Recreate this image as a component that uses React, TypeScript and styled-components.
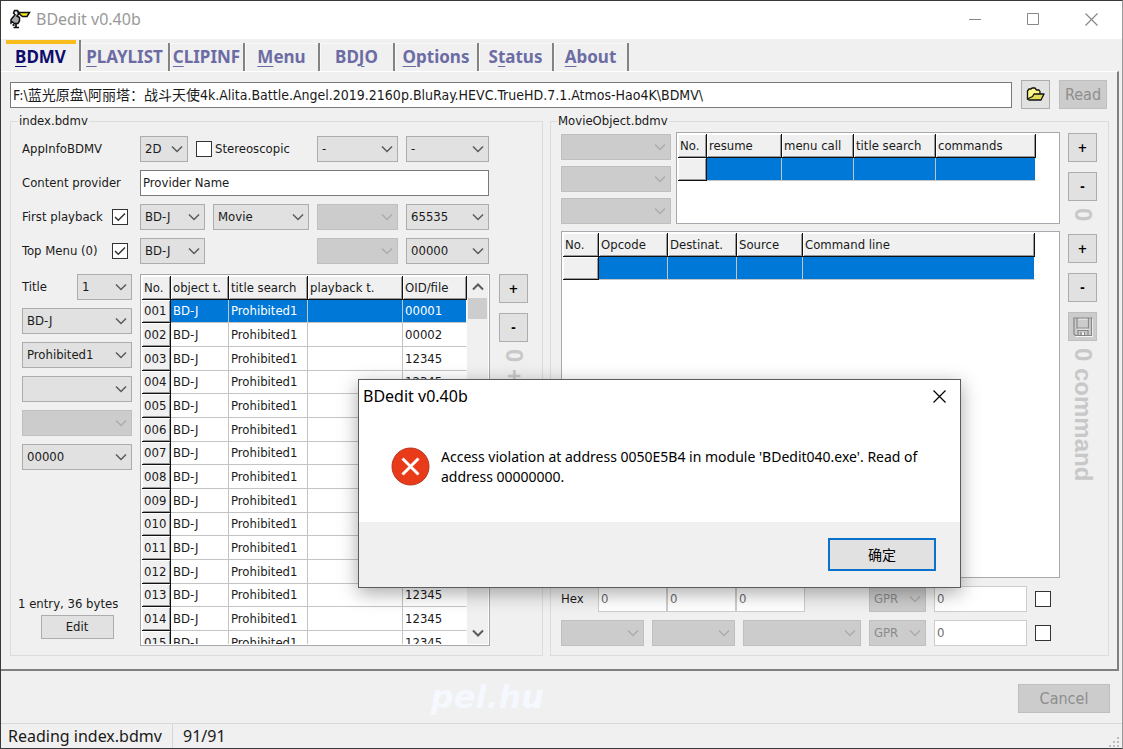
import React from "react";
import styled, { createGlobalStyle, css } from "styled-components";

const uiFont = `"DejaVu Sans Condensed", "Noto Sans", "Noto Sans CJK SC", sans-serif`;
const shellFont = `"Noto Sans", "Noto Sans CJK SC", sans-serif`;

const GlobalStyle = createGlobalStyle`
  *, *::before, *::after { box-sizing: border-box; }
  body { margin: 0; background: #f0f0f0; font: 13px/18px ${uiFont}; color: #1a1a1a; }
  button, input, select { font: inherit; color: inherit; margin: 0; border-radius: 0; }
`;

const Window = styled.div`
  position: relative;
  display: flex;
  flex-direction: column;
  height: 100vh;
  min-height: 640px;
  min-width: 1000px;
  background: #f0f0f0;
  border: 1px solid #3a3a3c;
  border-right-color: #9a9a9a;
`;

const TitleBar = styled.header`
  display: flex;
  align-items: center;
  flex: none;
  height: 38px;
  padding: 0 2px 2px 9px;
  background: #fff;
  color: #999;
  font: 16px/24px ${shellFont};
`;

const TitleText = styled.h1`
  flex: 1;
  margin: 0 0 0 5px;
  font: inherit;
`;

const CaptionButton = styled.button`
  display: grid;
  place-items: center;
  width: 58px;
  height: 36px;
  padding: 0;
  border: 0;
  background: none;
`;

const Tabs = styled.nav`
  display: flex;
  flex: none;
  align-items: flex-end;
  height: 32px;
  padding-left: 5px;
`;

const Tab = styled.button<{ $active?: boolean; $wide?: number }>`
  width: ${(p) => p.$wide ?? 75}px;
  height: ${(p) => (p.$active ? 31 : 28)}px;
  padding: 0 2px;
  border: 0;
  border-right: 2px solid #838383;
  background: #f0f0f0;
  box-shadow: inset 1px 1px #fafafa;
  color: #6c6ca4;
  font: bold 17px/26px ${shellFont};
  u { text-underline-offset: 3px; text-decoration-thickness: 1px; }
  ${(p) =>
    p.$active &&
    css`
      color: #0c0c6c;
      background: linear-gradient(#f8bc1c, #f8bc1c) 0 0 / 70px 4px no-repeat #f0f0f0;
      box-shadow: none;
      padding: 3px 4px 0 0;
    `}
`;

const Panel = styled.main`
  display: flex;
  flex-direction: column;
  flex: 1;
  min-height: 0;
  margin-right: 3px;
  padding: 8px 8px 13px 9px;
  border-top: 1px solid #fff;
  border-right: 2px solid #808080;
  border-bottom: 2px solid #808080;
`;

const PathRow = styled.div`
  display: flex;
  align-items: center;
  flex: none;
  gap: 9px;
  padding-right: 2px;
`;

const TextBox = styled.input<{ $w?: number }>`
  flex: ${(p) => (p.$w ? "none" : 1)};
  width: ${(p) => (p.$w ? `${p.$w}px` : "auto")};
  min-width: 0;
  height: 26px;
  padding: 0 2px 2px;
  border: 1px solid #7a7a7a;
  background: #fff;
  &:disabled { border-color: #ccc; color: #6d6d6d; }
`;

const PathBox = styled(TextBox)`
  font-size: 14px;
`;

const PushButton = styled.button<{ $w?: number; $h?: number }>`
  display: grid;
  place-items: center;
  flex: none;
  width: ${(p) => p.$w ?? 29}px;
  height: ${(p) => p.$h ?? 29}px;
  padding: 0;
  border: 1px solid #adadad;
  background: #e1e1e1;
  &:disabled { border-color: #bfbfbf; background: #ccc; color: #8e8e8e; }
`;

const LargeButton = styled(PushButton)`
  font-size: 16px;
`;

const SignButton = styled(PushButton)`
  color: #000;
  font-weight: bold;
`;

const Groups = styled.div`
  display: flex;
  flex: 1;
  min-height: 0;
  gap: 7px;
  margin-top: 3px;
`;

const Group = styled.fieldset<{ $w?: number }>`
  display: flex;
  flex-direction: column;
  flex: ${(p) => (p.$w ? "none" : 1)};
  width: ${(p) => (p.$w ? `${p.$w}px` : "auto")};
  min-width: 0;
  min-height: 0;
  margin: 0;
  padding: 0 11px 9px ${(p) => (p.$w ? 11 : 10)}px;
  border: 1px solid #dcdcdc;
`;

const Legend = styled.legend`
  margin-left: -4px;
  padding: 0 1px;
`;

const Form = styled.div`
  display: grid;
  flex: none;
  grid-template-columns: 110px 65px 96px 81px 83px;
  grid-auto-rows: 26px;
  gap: 8px;
  align-items: stretch;
  margin: 6px 0 10px;
`;

const FieldLabel = styled.label`
  align-self: center;
`;

const CheckedLabel = styled.div`
  display: flex;
  align-items: center;
  justify-content: space-between;
  padding-right: 4px;
`;

const ModeCell = styled.div`
  display: flex;
  align-items: center;
  grid-column: 2 / span 2;
  gap: 8px;
`;

const ProviderBox = styled(TextBox)`
  grid-column: 2 / -1;
`;

const DisabledCell = styled.div`
  display: grid;
  grid-column: 4;
`;

const SelectFrame = styled.span<{ $w?: number }>`
  display: grid;
  flex: none;
  width: ${(p) => (p.$w ? `${p.$w}px` : "auto")};
  height: 26px;
  align-items: center;
  > select, > svg { grid-area: 1 / 1; }
  > svg { justify-self: end; margin-right: 5px; pointer-events: none; }
`;

const SelectBox = styled.select`
  appearance: none;
  width: 100%;
  height: 26px;
  padding: 0 18px 0 4px;
  border: 1px solid #adadad;
  background: #e1e1e1;
  &:disabled { border-color: #bfbfbf; background: #ccc; color: #8a8a8a; opacity: 1; }
`;

const CheckLabel = styled.label`
  display: flex;
  align-items: center;
  gap: 3px;
`;

const CheckFrame = styled.span`
  display: grid;
  flex: none;
  place-items: center;
  width: 16px;
  height: 16px;
  > * { grid-area: 1 / 1; }
  > svg { display: none; pointer-events: none; }
  > input:checked + svg { display: block; }
`;

const CheckBox = styled.input`
  appearance: none;
  width: 16px;
  height: 16px;
  border: 1px solid #333;
  background: #fff;
`;

const Columns = styled.div<{ $gap?: number; $grow?: boolean }>`
  display: flex;
  flex: ${(p) => (p.$grow ? "1 1 0" : "none")};
  min-height: 0;
  gap: ${(p) => p.$gap ?? 8}px;
`;

const Stack = styled.div<{ $w?: number; $gap?: number; $pad?: string }>`
  display: flex;
  flex-direction: column;
  flex: none;
  width: ${(p) => (p.$w ? `${p.$w}px` : "auto")};
  gap: ${(p) => p.$gap ?? 8}px;
  padding: ${(p) => p.$pad ?? 0};
`;

const TitleRow = styled.div`
  display: flex;
  align-items: center;
  justify-content: space-between;
`;

const EntryInfo = styled.div`
  display: flex;
  flex-direction: column;
  align-items: center;
  gap: 2px;
  margin: auto -4px 7px;
`;

const EntryText = styled.span`
  align-self: flex-start;
  white-space: nowrap;
`;

const ListFrame = styled.div`
  display: flex;
  flex: 1;
  min-width: 0;
  min-height: 0;
  padding: 1px;
  overflow: hidden;
  border: 1px solid #a6a9ad;
  background: #fff;
`;

const ListView = styled.div`
  flex: 1;
  min-width: 0;
  overflow: hidden;
`;

const Grid = styled.table`
  border-collapse: separate;
  border-spacing: 0;
  table-layout: fixed;
  width: 0;
  white-space: nowrap;

  th, td { padding: 0 0 0 2px; overflow: hidden; text-align: left; font-weight: normal; line-height: 20px; }
  th {
    background: #f0f0f0;
    border-right: 1px solid #111;
    border-bottom: 1px solid #111;
    box-shadow: inset 1px 1px #fff, inset -1px -1px #9a9a9a;
  }
  thead tr { height: 24px; }
  tbody tr { height: 24px; }
  tbody tr:nth-child(3n + 1) { height: 23px; }
  td { border-right: 1px solid #c4c4c4; border-bottom: 1px solid #c4c4c4; }
  td:last-child { border-right-color: transparent; }
`;

const GridRow = styled.tr<{ $selected?: boolean }>`
  ${(p) =>
    p.$selected &&
    css`
      td { background: #0078d7; background-clip: padding-box; color: #fff; }
    `}
`;

const ScrollBar = styled.div`
  display: flex;
  flex-direction: column;
  flex: none;
  align-items: center;
  width: 21px;
  background: #f0f0f0;
`;

const ScrollButton = styled.button`
  display: grid;
  place-items: center;
  width: 100%;
  height: 22px;
  padding: 0;
  border: 0;
  background: none;
`;

const ScrollThumb = styled.span`
  flex: none;
  width: 19px;
  height: 21px;
  margin-bottom: auto;
  background: #cdcdcd;
`;

const Gauge = styled.span`
  align-self: center;
  height: 14px;
  margin-top: -3px;
  overflow: visible;
  writing-mode: vertical-rl;
  white-space: pre;
  color: #c8c8c8;
  font: bold 24px/24px "Liberation Sans", Arial, sans-serif;
`;

const TopRow = styled(Columns)`
  margin: 2px 0 7px;
`;

const BottomRow = styled.div`
  display: grid;
  flex: none;
  grid-template-columns: 83px 83px 118px 57px 93px 16px;
  gap: 8px;
  align-items: center;
  height: 26px;
  margin-top: 8px;
`;

const HexFields = styled.div`
  display: flex;
  align-items: center;
  grid-column: 1 / span 3;
  > label { width: 37px; }
`;

const Footer = styled.footer`
  display: flex;
  align-items: center;
  flex: none;
  height: 52px;
  padding: 3px 12px 0 0;
`;

const Brand = styled.strong`
  flex: 1;
  padding: 0 44px 4px 0;
  text-align: center;
  color: #f5f8fe;
  font: italic bold 32px/36px "DejaVu Sans", sans-serif;
`;

const StatusBar = styled.div`
  display: flex;
  align-items: stretch;
  flex: none;
  height: 25px;
  border-top: 1px solid #d7d7d7;
  font: 16px/24px ${shellFont};
`;

const StatusCell = styled.span<{ $w?: number }>`
  flex: ${(p) => (p.$w ? "none" : 1)};
  width: ${(p) => (p.$w ? `${p.$w}px` : "auto")};
  padding-left: 7px;
  & + & { padding-left: 10px; border-left: 1px solid #d7d7d7; }
`;

const Grip = styled.svg`
  align-self: flex-end;
  margin-right: 2px;
`;

const Dialog = styled.section`
  position: absolute;
  left: 357px;
  top: 378px;
  width: 603px;
  border: 1px solid #5c5c5c;
  background: #fff;
  box-shadow: 0 5px 18px rgba(0, 0, 0, 0.34);
  color: #000;
`;

const DialogTitle = styled.div`
  display: flex;
  align-items: center;
  justify-content: space-between;
  height: 32px;
  padding-left: 4px;
  font: 16px/24px ${shellFont};
`;

const DialogClose = styled(CaptionButton)`
  width: 42px;
  height: 32px;
`;

const DialogBody = styled.div`
  display: flex;
  align-items: flex-start;
  gap: 11px;
  height: 110px;
  padding: 35px 0 0 32px;
  font: 14px/20px ${shellFont};
  p { width: 490px; margin: 0; }
`;

const DialogActions = styled.div`
  display: flex;
  justify-content: flex-end;
  padding: 16px 24px;
  background: #f0f0f0;
`;

const OkButton = styled(PushButton)`
  border: 2px solid #0a72cc;
  font-size: 14px;
`;

const Chevron = ({ color = "#5a5a5a", width = 1.5, up = false }: { color?: string; width?: number; up?: boolean }) => (
  <svg width="12" height="8" viewBox="0 0 12 8" fill="none" stroke={color} strokeWidth={width}>
    <path d={up ? "M1 6.5 6 1.5l5 5" : "M1 1.5l5 5 5-5"} />
  </svg>
);

function Select({ label, value = "", w, disabled }: { label: string; value?: string; w?: number; disabled?: boolean }) {
  return (
    <SelectFrame $w={w}>
      <SelectBox aria-label={label} disabled={disabled} defaultValue={value}>
        <option value={value}>{value}</option>
      </SelectBox>
      <Chevron color={disabled ? "#acacac" : "#5a5a5a"} />
    </SelectFrame>
  );
}

function Check({ id, label, checked }: { id?: string; label?: string; checked?: boolean }) {
  return (
    <CheckFrame>
      <CheckBox type="checkbox" id={id} aria-label={label} defaultChecked={checked} />
      <svg width="12" height="10" viewBox="0 0 12 10" fill="none" stroke="#333" strokeWidth="1.5">
        <path d="M1 5l3.300 3.300L11 1.500" />
      </svg>
    </CheckFrame>
  );
}

const Cross = ({ color }: { color: string }) => (
  <svg width="13" height="13" viewBox="0 0 13 13" stroke={color} strokeWidth="1.2">
    <path d="M0.500 0.500l12 12M12.500 0.500l-12 12" />
  </svg>
);

const Pelican = () => (
  <svg width="21" height="20" viewBox="0 0 21 20">
    <path
      d="M4.500 1.500h3l1 1.500v2.500l-1.500 1.500 2.500 1.500v3.500l-1.500 2.500h-3.500L2.500 13 1 14v-3.500L4 7l1-1.500-1.500-1.500z"
      fill="#a3a8ad"
      stroke="#111"
      strokeWidth="1.500"
    />
    <path d="M8.500 3.500h11l-2.500 4h-4.500l-2.500-2z" fill="#f2e81c" stroke="#111" strokeWidth="1.500" />
    <path d="M6 14.500v4M2.500 15.500l2 1M3.500 18.500h5.500" fill="none" stroke="#111" strokeWidth="1.700" />
    <rect x="5" y="3" width="2" height="2" fill="#eee" />
  </svg>
);

const FolderOpen = () => (
  <svg width="19" height="15" viewBox="0 0 19 15" stroke="#111" strokeWidth="1.300" strokeLinejoin="round">
    <path d="M1.500 12V4L3 2h2l1-1h3l1.500 2H13l1 1.500V7" fill="#fbf78c" />
    <path d="M1.300 12 6.500 9.500 8 7h10l-3 6H3z" fill="#e2dc58" />
  </svg>
);

const Floppy = () => (
  <svg width="20" height="20" viewBox="0 0 20 20" fill="none" strokeWidth="1.200">
    <path d="M19.500 2v17.500h-17" stroke="#f6f6f6" />
    <path d="M5 12h10.500M5.500 2h9" stroke="#f6f6f6" />
    <path d="M1 1h17.500v17.500H2.500L1 17z" stroke="#858585" />
    <path d="M4 1v10h11.500V1" stroke="#8c8c8c" />
    <path d="M5 18.500v-5h10v5M8 15v3.500M11.500 15v3.500" stroke="#858585" />
    <path d="M9 15.500h2v2.500H9z" fill="#f6f6f6" />
  </svg>
);

const tabs: { before: string; key: string; after: string; w?: number }[] = [
  { before: "", key: "B", after: "DMV" },
  { before: "", key: "P", after: "LAYLIST", w: 89 },
  { before: "", key: "C", after: "LIPINF" },
  { before: "", key: "M", after: "enu" },
  { before: "BD", key: "J", after: "O" },
  { before: "", key: "O", after: "ptions", w: 84 },
  { before: "S", key: "t", after: "atus" },
  { before: "", key: "A", after: "bout" },
];

const titles = Array.from({ length: 15 }, (_, i) => ({
  no: String(i + 1).padStart(3, "0"),
  file: i === 0 ? "00001" : i === 1 ? "00002" : "12345",
}));

const PlusMinus = ({ target }: { target: string }) => (
  <>
    <SignButton aria-label={`Add ${target}`}>+</SignButton>
    <SignButton aria-label={`Remove ${target}`}>-</SignButton>
  </>
);

function EmptyGrid({ heads, widths }: { heads: string[]; widths: number[] }) {
  return (
    <ListView>
      <Grid>
        <colgroup>{widths.map((w, i) => <col key={i} width={w} />)}</colgroup>
        <thead>
          <tr>{heads.map((h) => <th key={h} scope="col">{h}</th>)}</tr>
        </thead>
        <tbody>
          <GridRow $selected>
            <th scope="row" />
            {heads.slice(1).map((h) => <td key={h} />)}
          </GridRow>
        </tbody>
      </Grid>
    </ListView>
  );
}

function IndexGroup() {
  return (
    <Group $w={533}>
      <Legend>index.bdmv</Legend>
      <Form>
        <FieldLabel as="span">AppInfoBDMV</FieldLabel>
        <ModeCell>
          <Select label="AppInfoBDMV dimension" value="2D" w={48} />
          <CheckLabel><Check />Stereoscopic</CheckLabel>
        </ModeCell>
        <Select label="Video format" value="-" />
        <Select label="Frame rate" value="-" />

        <FieldLabel htmlFor="provider">Content provider</FieldLabel>
        <ProviderBox id="provider" defaultValue="Provider Name" />

        <CheckedLabel>
          <label htmlFor="first">First playback</label>
          <Check id="first" checked />
        </CheckedLabel>
        <Select label="First playback object" value="BD-J" />
        <Select label="First playback type" value="Movie" />
        <Select label="First playback access" disabled />
        <Select label="First playback id" value="65535" />

        <CheckedLabel>
          <label htmlFor="top">Top Menu (0)</label>
          <Check id="top" checked />
        </CheckedLabel>
        <Select label="Top menu object" value="BD-J" />
        <DisabledCell><Select label="Top menu access" disabled /></DisabledCell>
        <Select label="Top menu id" value="00000" />
      </Form>
      <Columns $grow>
        <Stack $w={110}>
          <TitleRow>
            <span>Title</span>
            <Select label="Title" value="1" w={55} />
          </TitleRow>
          <Select label="Title object" value="BD-J" />
          <Select label="Title search" value="Prohibited1" />
          <Select label="Playback type" />
          <Select label="Playback access" disabled />
          <Select label="Title file" value="00000" />
          <EntryInfo>
            <EntryText>1 entry, 36 bytes</EntryText>
            <PushButton $w={73} $h={24}>Edit</PushButton>
          </EntryInfo>
        </Stack>
        <ListFrame>
          <ListView>
            <Grid>
              <colgroup>
                <col width={29} /><col width={58} /><col width={79} /><col width={95} /><col width={64} />
              </colgroup>
              <thead>
                <tr>
                  {["No.", "object t.", "title search", "playback t.", "OID/file"].map((h) => (
                    <th key={h} scope="col">{h}</th>
                  ))}
                </tr>
              </thead>
              <tbody>
                {titles.map((t, i) => (
                  <GridRow key={t.no} $selected={i === 0}>
                    <th scope="row">{t.no}</th>
                    <td>BD-J</td>
                    <td>Prohibited1</td>
                    <td />
                    <td>{t.file}</td>
                  </GridRow>
                ))}
              </tbody>
            </Grid>
          </ListView>
          <ScrollBar>
            <ScrollButton aria-label="Scroll up"><Chevron width={2} up /></ScrollButton>
            <ScrollThumb />
            <ScrollButton aria-label="Scroll down"><Chevron width={2} /></ScrollButton>
          </ScrollBar>
        </ListFrame>
        <Stack $w={33} $gap={10} $pad="0 3px 0 1px">
          <PlusMinus target="title" />
          <Gauge>0 +</Gauge>
        </Stack>
      </Columns>
    </Group>
  );
}

function MovieGroup() {
  return (
    <Group>
      <Legend>MovieObject.bdmv</Legend>
      <TopRow>
        <Columns $gap={5} $grow>
          <Stack $w={110} $gap={6} $pad="2px 0 0">
            <Select label="Resume flag" disabled />
            <Select label="Menu call mask" disabled />
            <Select label="Title search mask" disabled />
          </Stack>
          <ListFrame>
            <EmptyGrid
              heads={["No.", "resume", "menu call", "title search", "commands"]}
              widths={[29, 75, 72, 82, 100]}
            />
          </ListFrame>
        </Columns>
        <Stack $w={29} $gap={10} $pad="1px 0 0">
          <PlusMinus target="object" />
          <Gauge>0</Gauge>
        </Stack>
      </TopRow>
      <Columns $grow>
        <ListFrame>
          <EmptyGrid
            heads={["No.", "Opcode", "Destinat.", "Source", "Command line"]}
            widths={[36, 69, 69, 66, 232]}
          />
        </ListFrame>
        <Stack $w={29} $gap={10} $pad="3px 0 0">
          <PlusMinus target="command" />
          <PushButton disabled aria-label="Save"><Floppy /></PushButton>
          <Gauge>0 command</Gauge>
        </Stack>
      </Columns>
      <BottomRow>
        <HexFields>
          <label htmlFor="hex">Hex</label>
          <TextBox id="hex" $w={69} defaultValue="0" disabled />
          <TextBox aria-label="Hex destination" $w={69} defaultValue="0" disabled />
          <TextBox aria-label="Hex source" $w={69} defaultValue="0" disabled />
        </HexFields>
        <Select label="Destination register" value="GPR" disabled />
        <TextBox aria-label="Destination value" $w={93} defaultValue="0" disabled />
        <Check label="Destination immediate" />
      </BottomRow>
      <BottomRow>
        <Select label="Operation group" disabled />
        <Select label="Operation subgroup" disabled />
        <Select label="Operation" disabled />
        <Select label="Source register" value="GPR" disabled />
        <TextBox aria-label="Source value" $w={93} defaultValue="0" disabled />
        <Check label="Source immediate" />
      </BottomRow>
    </Group>
  );
}

function ErrorDialog() {
  return (
    <Dialog role="alertdialog" aria-labelledby="error-title">
      <DialogTitle>
        <span id="error-title">BDedit v0.40b</span>
        <DialogClose aria-label="Close message"><Cross color="#000" /></DialogClose>
      </DialogTitle>
      <DialogBody>
        <svg width="39" height="39" viewBox="0 0 39 39">
          <circle cx="19.500" cy="19.500" r="18.500" fill="#e93a1a" stroke="#b5341c" />
          <path d="M11.500 11.500l16 16M27.500 11.500l-16 16" stroke="#fff" strokeWidth="3" />
        </svg>
        <p>Access violation at address 0050E5B4 in module 'BDedit040.exe'. Read of address 00000000.</p>
      </DialogBody>
      <DialogActions>
        <OkButton $w={108} $h={33}>确定</OkButton>
      </DialogActions>
    </Dialog>
  );
}

export default function App() {
  return (
    <Window>
      <GlobalStyle />
      <TitleBar>
        <Pelican />
        <TitleText>BDedit v0.40b</TitleText>
        <CaptionButton aria-label="Minimize">
          <svg width="13" height="13" stroke="#888"><path d="M0 6.500h12" /></svg>
        </CaptionButton>
        <CaptionButton aria-label="Maximize">
          <svg width="13" height="13" fill="none" stroke="#888"><path d="M0.500 0.500h11v11h-11z" /></svg>
        </CaptionButton>
        <CaptionButton aria-label="Close"><Cross color="#888" /></CaptionButton>
      </TitleBar>
      <Tabs>
        {tabs.map((t, i) => (
          <Tab key={t.key + t.after} $active={i === 0} $wide={t.w}>
            {t.before}<u>{t.key}</u>{t.after}
          </Tab>
        ))}
      </Tabs>
      <Panel>
        <PathRow>
          <PathBox
            aria-label="Disc path"
            defaultValue="F:\蓝光原盘\阿丽塔：战斗天使4k.Alita.Battle.Angel.2019.2160p.BluRay.HEVC.TrueHD.7.1.Atmos-Hao4K\BDMV\"
          />
          <PushButton aria-label="Browse"><FolderOpen /></PushButton>
          <LargeButton $w={48} disabled>Read</LargeButton>
        </PathRow>
        <Groups>
          <IndexGroup />
          <MovieGroup />
        </Groups>
      </Panel>
      <Footer>
        <Brand>pel.hu</Brand>
        <LargeButton $w={92} disabled>Cancel</LargeButton>
      </Footer>
      <StatusBar>
        <StatusCell $w={171}>Reading index.bdmv</StatusCell>
        <StatusCell>91/91</StatusCell>
        <Grip width="11" height="11" fill="#bdbdbd">
          <path d="M8 0h2v2h-2zM4 4h2v2h-2zM8 4h2v2h-2zM0 8h2v2h-2zM4 8h2v2h-2zM8 8h2v2h-2z" />
        </Grip>
      </StatusBar>
      <ErrorDialog />
    </Window>
  );
}
